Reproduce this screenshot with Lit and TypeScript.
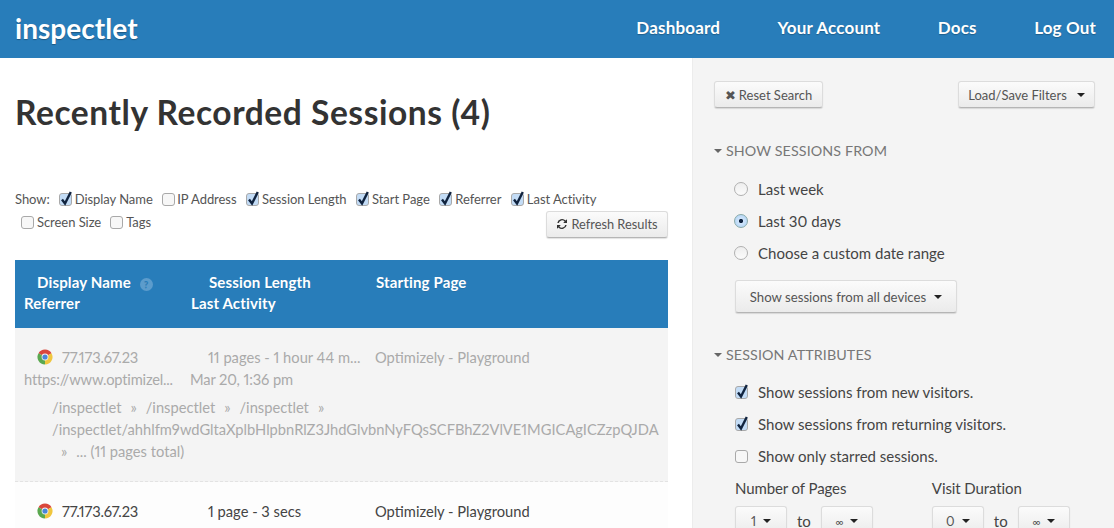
import { LitElement, html, css, svg } from "lit";
import { customElement } from "lit/decorators.js";

const chrome = html`<svg class="chrome" viewBox="0 0 16 16" aria-hidden="true">
  <path d="M8 8L1.5 4.25A7.5 7.5 0 0 1 14.5 4.25Z" fill="#d9473c"/>
  <path d="M8 8L14.5 4.25A7.5 7.5 0 0 1 8 15.5Z" fill="#f0c63e"/>
  <path d="M8 8L8 15.5A7.5 7.5 0 0 1 1.5 4.25Z" fill="#5aa84f"/>
  <circle cx="8" cy="8" r="3.4" fill="#f4f4f4"/><circle cx="8" cy="8" r="2.6" fill="#4a86d8"/>
</svg>`;

const check = svg`<path d="M3 7.5L6 11.5L11.8 0" fill="none" stroke="#10233f" stroke-width="2.4"/>`;
const box = (on: boolean) => html`<svg class="box" viewBox="0 0 13 14" aria-hidden="true">
  <rect x=".5" y="1.5" width="12" height="12" rx="2.5" fill="${on ? "#c3dcf6" : "#f7f7f7"}" stroke="#a9a9a9"/>
  ${on ? check : ""}
</svg>`;
const radio = (on: boolean) => html`<span class="radio ${on ? "on" : ""}"></span>`;
const caret = html`<span class="caret"></span>`;

@customElement("app-root")
export class AppRoot extends LitElement {
  static styles = css`
    :host { display: block; width: 1114px; height: 528px; overflow: hidden; font-family: "Lato", "Liberation Sans", sans-serif; color: #333; background: #fff; font-variant-numeric: proportional-nums; }
    * { box-sizing: border-box; }
    .top { height: 58px; background: #287dba; display: flex; align-items: center; justify-content: space-between; padding: 0 18px 3px 15px; color: #fff; }
    .logo { font-size: 28px; font-weight: 700; letter-spacing: .05px; text-shadow: 0 1px 1px rgba(0,0,0,.3); }
    .nav { display: flex; gap: 57.5px; font-size: 17px; font-weight: 700; letter-spacing: .16px; text-shadow: 0 1px 1px rgba(0,0,0,.25); }
    .body { display: flex; height: 470px; }
    .main { width: 692px; padding: 0 24px 0 15px; flex: none; overflow: hidden; }
    h1 { margin: 34px 0 0; font-size: 33.5px; line-height: 40px; font-weight: 700; color: #333; letter-spacing: .56px; }
    .show { margin-top: 55px; height: 73px; font-size: 13px; color: #555; letter-spacing: -.05px; }
    .opts { width: 100%; display: flex; align-items: center; height: 23px; }
    .opts2 { padding-left: 6px; }
    .opt { display: inline-flex; align-items: center; gap: 3px; margin-right: 9.5px; white-space: nowrap; }
    .opts span.lead { margin-right: 9px; }
    .opts2 .opt { margin-right: 9px; gap: 3px; }
    .box { width: 13px; height: 14px; flex: none; overflow: visible; }
    .opt .box { margin-top: 1px; }
    .opt.un { gap: 2px; }
    .btn { display: inline-flex; align-items: center; justify-content: center; border: 1px solid #dcdcdc; border-bottom: 1px solid #b5b5b5; border-radius: 3px; background: linear-gradient(#fbfbfb, #ebebeb); color: #555; font-size: 13px; white-space: nowrap; box-shadow: 0 1px 1px rgba(0,0,0,.12); }
    .refresh { width: 122px; height: 27px; gap: 3px; margin-top: 5px; margin-left: auto; font-size: 12.8px; letter-spacing: 0; }
    .grid { display: grid; grid-template-columns: 176px 185px 1fr; }
    .thead { background: #287dba; color: #fff; font-weight: 700; font-size: 15px; height: 68px; padding-top: 12px; grid-auto-rows: 21px; line-height: 21px; letter-spacing: .15px; text-shadow: 0 1px 0 rgba(0,0,0,.1); }
    .thead > div, .r > div { padding-left: 9px; white-space: nowrap; }
    .thead > div.i, .r > div.i { padding-left: 22px; }
    .thead > div.j { padding-left: 18px; }
    .thead > div.s { padding-left: 0; }
    .r > div.j { padding-left: 17px; }
    .r > div.s { padding-left: 0; margin-left: -1px; }
    .r > div.d { padding-left: 0; margin-left: -1px; letter-spacing: -.12px; }
    .r > div.ref { letter-spacing: -.2px; }
    .r > div.ip { letter-spacing: -.15px; }
    .q { display: inline-flex; width: 13px; height: 13px; margin-left: 5px; border-radius: 50%; background: #5c9ccc; color: #287dba; font-size: 10px; line-height: 13px; align-items: center; justify-content: center; vertical-align: 0; }
    .row { font-size: 14.7px; line-height: 22px; }
    .row.a { background: #f4f4f4; color: #aaa; height: 154px; padding-top: 18px; border-bottom: 1px dashed #e3e3e3; }
    .row.b { background: #fdfdfd; color: #444; padding-top: 18px; }
    .ip { display: flex; align-items: center; gap: 9px; }
    .chrome { width: 16px; height: 16px; flex: none; }
    .paths { padding: 6px 0 0 37px; white-space: nowrap; }
    .paths span { padding: 0 9px; }
    .side { flex: 1; background: #f4f4f4; border-left: 1px solid #ececec; padding: 23px 19px 0 21px; font-size: 15px; color: #444; overflow: hidden; }
    .btns { display: flex; justify-content: space-between; }
    .reset { width: 109px; height: 27px; gap: 3px; }
    .load { width: 137px; height: 27px; gap: 10px; }
    .caret { width: 0; height: 0; border-left: 4px solid transparent; border-right: 4px solid transparent; border-top: 4px solid #222; display: inline-block; flex: none; }
    h2 { margin: 33px 0 0; font-size: 14.3px; line-height: 20px; font-weight: 400; color: #777; display: flex; align-items: center; gap: 4px; letter-spacing: .1px; }
    h2 .caret { border-top-color: #666; border-left-width: 4.5px; border-right-width: 4.5px; }
    .list { margin-top: 12px; padding-left: 20px; }
    .list.attr { margin-top: 11px; padding-left: 21px; }
    .item { display: flex; align-items: center; height: 32px; gap: 10px; }
    .radio { width: 14px; height: 14px; margin-right: 0; border-radius: 50%; border: 1px solid #b0b0b0; background: linear-gradient(#eee, #fbfbfb); flex: none; display: inline-flex; align-items: center; justify-content: center; }
    .radio.on { background: radial-gradient(circle, #10233f 0 1.8px, #cfe4fa 2.4px, #a9cff3 100%); border-color: #8aa; }
    .devices { width: 222px; height: 33px; margin: 11px 0 0 1px; gap: 8px; font-size: 13.2px; }
    .attrs-h { margin-top: 32px; }
    .ranges { display: flex; margin: 6px 0 0 21px; gap: 59px; }
    .range .lbl { line-height: 20px; letter-spacing: -.1px; }
    .sel { display: flex; align-items: center; gap: 10px; margin-top: 8px; }
    .drop { width: 52px; height: 30px; gap: 7px; flex: none; }
    .drop.wide { font-size: 11px; }
  `;

  render() {
    return html`
      <div class="top">
        <div class="logo">inspectlet</div>
        <div class="nav"><span>Dashboard</span><span>Your Account</span><span>Docs</span><span>Log Out</span></div>
      </div>
      <div class="body">
        <div class="main">
          <h1>Recently Recorded Sessions (4)</h1>
          <div class="show">
            <div class="opts">
              <span class="lead">Show:</span>
              <span class="opt">${box(true)}Display Name</span>
              <span class="opt un">${box(false)}IP Address</span>
              <span class="opt">${box(true)}Session Length</span>
              <span class="opt">${box(true)}Start Page</span>
              <span class="opt">${box(true)}Referrer</span>
              <span class="opt">${box(true)}Last Activity</span>
            </div>
            <div class="opts opts2">
              <span class="opt">${box(false)}Screen Size</span>
              <span class="opt">${box(false)}Tags</span>
              <span class="btn refresh">
                <svg width="12" height="12" viewBox="0 0 12 12" aria-hidden="true"><path d="M1.3 5A4.8 4.8 0 0 1 9.6 2.6L11 1.2V5H7.2L8.6 3.6A3.3 3.3 0 0 0 2.8 5ZM10.7 7A4.8 4.8 0 0 1 2.4 9.4L1 10.8V7H4.8L3.4 8.4A3.3 3.3 0 0 0 9.2 7Z" fill="#333"/></svg>
                Refresh Results
              </span>
            </div>
          </div>
          <div class="thead grid">
            <div class="i">Display Name <span class="q">?</span></div>
            <div class="j">Session Length</div>
            <div class="s">Starting Page</div>
            <div>Referrer</div>
            <div class="s">Last Activity</div>
          </div>
          <div class="row a">
            <div class="r grid">
              <div class="i ip">${chrome}77.173.67.23</div>
              <div class="j">11 pages - 1 hour 44 m...</div>
              <div class="s">Optimizely - Playground</div>
              <div class="ref">https://www.optimizel...</div>
              <div class="d">Mar 20, 1:36 pm</div>
            </div>
            <div class="paths">/inspectlet<span>»</span>/inspectlet<span>»</span>/inspectlet<span>»</span><br />/inspectlet/ahhlfm9wdGltaXplbHlpbnRlZ3JhdGlvbnNyFQsSCFBhZ2VlVE1MGICAgICZzpQJDA<br /><span>»</span>... (11 pages total)</div>
          </div>
          <div class="row b">
            <div class="r grid">
              <div class="i ip">${chrome}77.173.67.23</div>
              <div class="j">1 page - 3 secs</div>
              <div class="s">Optimizely - Playground</div>
              <div class="ref">Direct</div>
              <div class="d">Mar 20, 11:22 am</div>
            </div>
          </div>
        </div>
        <div class="side">
          <div class="btns">
            <span class="btn reset"><span>✖</span>Reset Search</span>
            <span class="btn load">Load/Save Filters ${caret}</span>
          </div>
          <h2>${caret}SHOW SESSIONS FROM</h2>
          <div class="list">
            <div class="item">${radio(false)}Last week</div>
            <div class="item">${radio(true)}Last 30 days</div>
            <div class="item">${radio(false)}Choose a custom date range</div>
            <span class="btn devices">Show sessions from all devices ${caret}</span>
          </div>
          <h2 class="attrs-h">${caret}SESSION ATTRIBUTES</h2>
          <div class="list attr">
            <div class="item">${box(true)}Show sessions from new visitors.</div>
            <div class="item">${box(true)}Show sessions from returning visitors.</div>
            <div class="item">${box(false)}Show only starred sessions.</div>
          </div>
          <div class="ranges">
            <div class="range"><div class="lbl">Number of Pages</div>
              <div class="sel"><span class="btn drop">1 ${caret}</span>to<span class="btn drop wide">∞ ${caret}</span></div></div>
            <div class="range"><div class="lbl">Visit Duration</div>
              <div class="sel"><span class="btn drop">0 ${caret}</span>to<span class="btn drop wide">∞ ${caret}</span></div></div>
          </div>
        </div>
      </div>`;
  }
}
